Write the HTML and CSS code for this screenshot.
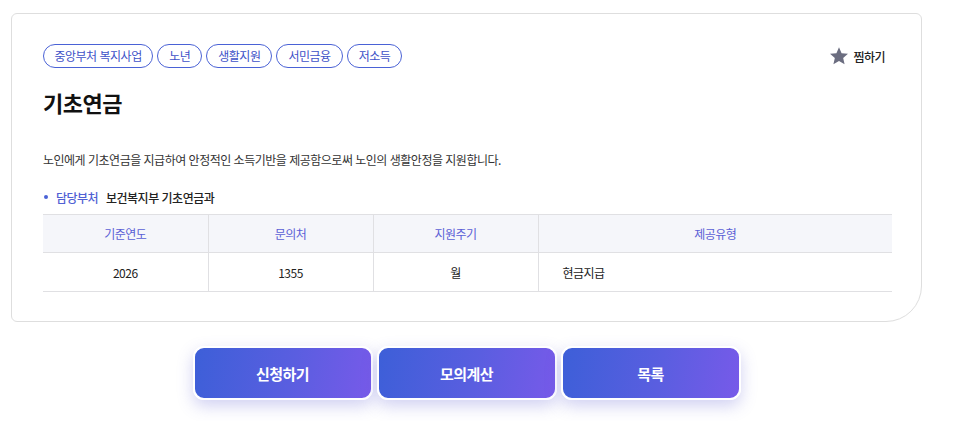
FILE: index.html
```html
<!DOCTYPE html>
<html lang="ko">
<head>
<meta charset="utf-8">
<link rel="stylesheet" href="styles.css">
</head>
<body>
<div class="page">
  <section class="card">
    <div class="top">
      <ul class="tags">
        <li class="tag">중앙부처 복지사업</li>
        <li class="tag">노년</li>
        <li class="tag">생활지원</li>
        <li class="tag">서민금융</li>
        <li class="tag">저소득</li>
      </ul>
      <button class="fav" type="button">
        <svg class="star" viewBox="0 0 24 24" width="20" height="20"><path d="M12 1.5l3.1 7.1 7.7.7-5.8 5.1 1.7 7.6L12 18l-6.7 4 1.7-7.6-5.8-5.1 7.7-.7z" fill="#6b6d80"/></svg>
        <span>찜하기</span>
      </button>
    </div>
    <h1 class="title">기초연금</h1>
    <p class="desc">노인에게 기초연금을 지급하여 안정적인 소득기반을 제공함으로써 노인의 생활안정을 지원합니다.</p>
    <div class="dept"><span class="dot"></span><span class="dept-label">담당부처</span><span class="dept-value">보건복지부 기초연금과</span></div>
    <table class="info">
      <thead>
        <tr><th>기준연도</th><th>문의처</th><th>지원주기</th><th>제공유형</th></tr>
      </thead>
      <tbody>
        <tr><td>2026</td><td>1355</td><td>월</td><td class="left">현금지급</td></tr>
      </tbody>
    </table>
  </section>
  <div class="actions">
    <button class="btn" type="button">신청하기</button>
    <button class="btn" type="button">모의계산</button>
    <button class="btn" type="button">목록</button>
  </div>
</div>
</body>
</html>
```

FILE: styles.css
```css
* { box-sizing: border-box; }
body {
  margin: 0;
  background: #fff;
  font-family: "Noto Sans CJK KR", "Noto Sans", sans-serif;
  color: #222;
  letter-spacing: -0.5px;
}
.page {
  padding: 13px 0 24px 11px;
}
.card {
  width: 911px;
  height: 309px;
  border: 1px solid #dedede;
  border-radius: 6px 6px 36px 6px;
  padding: 30px 30px 0 31px;
  background: #fff;
}
.top {
  display: flex;
  justify-content: space-between;
  align-items: center;
  height: 24px;
}
.tags {
  display: flex;
  gap: 4px;
  list-style: none;
  margin: 0;
  padding: 0;
}
.tag {
  height: 24px;
  padding: 0 11px;
  border: 1px solid #4a62d6;
  border-radius: 12px;
  font-size: 12px;
  line-height: 22px;
  color: #4052c8;
}
.tag:first-child { padding: 0 10.5px; }
.fav {
  display: flex;
  align-items: center;
  gap: 4px;
  border: 0;
  background: none;
  padding: 0;
  margin-right: 6px;
  font-family: inherit;
  font-size: 12px;
  font-weight: 500;
  letter-spacing: -0.5px;
  color: #222;
}
.star { display: block; }
.title {
  margin: 19px 0 0;
  font-size: 22px;
  font-weight: 700;
  line-height: 30px;
  color: #111;
}
.desc {
  margin: 33px 0 0;
  font-size: 12px;
  line-height: 20px;
  color: #333;
}
.dept {
  display: flex;
  align-items: center;
  margin-top: 17px;
  height: 20px;
  font-size: 12px;
}
.dot {
  width: 4px;
  height: 4px;
  border-radius: 50%;
  background: #4a62d6;
  margin: 0 8px 0 1px;
}
.dept-label {
  color: #5060d4;
  font-weight: 500;
  width: 50px;
}
.dept-value {
  color: #222;
  font-weight: 500;
}
.info {
  margin-top: 7px;
  width: 849px;
  border-collapse: collapse;
  font-size: 12px;
  table-layout: fixed;
}
.info th, .info td {
  border: 1px solid #e0e0e3;
  text-align: center;
}
.info tr > :first-child { border-left: 0; }
.info tr > :last-child { border-right: 0; }
.info th:nth-child(-n+3), .info td:nth-child(-n+3) { width: 165px; }
.info th {
  height: 38px;
  background: #f5f6fa;
  color: #5b60d6;
  font-weight: 400;
}
.info td {
  height: 39px;
  color: #222;
  font-weight: 400;
}
.info td.left {
  text-align: left;
  padding-left: 24px;
}
.actions {
  display: flex;
  gap: 4px;
  justify-content: center;
  margin: 24px 0 0 -11px;
  width: 933px;
}
.btn {
  width: 180px;
  height: 54px;
  border: 2px solid #fff;
  border-radius: 11px;
  background: linear-gradient(100deg, #3d5fd8 0%, #5a5ee0 55%, #775ae9 100%);
  box-shadow: 0 6px 16px rgba(90, 90, 210, 0.28);
  color: #fff;
  font-family: inherit;
  font-size: 15px;
  font-weight: 700;
  letter-spacing: -0.5px;
}
```
